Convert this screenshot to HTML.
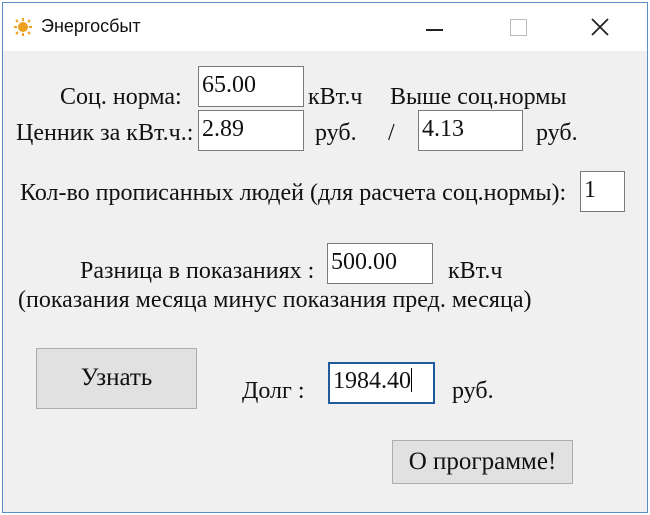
<!DOCTYPE html>
<html><head><meta charset="utf-8"><style>
body{margin:0;width:650px;height:515px;background:#fff;overflow:hidden;font-family:"Liberation Serif",serif;color:#111}
.win{position:absolute;left:2px;top:2px;width:644px;height:509px;border:1px solid #5a8ec4;background:#f0f0f0}
.tb{position:absolute;left:0;top:0;width:644px;height:48px;background:#fff;font-family:"Liberation Sans",sans-serif;font-size:18px}
.t{position:absolute;white-space:nowrap;font-size:24px;line-height:26px}
.in{position:absolute;background:#fff;border:1px solid #7a7a7a;box-sizing:border-box;font-size:24px;padding:5px 0 0 3px;line-height:26px;white-space:nowrap}
.btn{position:absolute;background:#e1e1e1;border:1px solid #adadad;box-sizing:border-box;text-align:center;font-size:25px}
</style></head><body>
<div class="win">
<div class="tb">
<svg style="position:absolute;left:10px;top:14px" width="20" height="20" viewBox="0 0 20 20"><circle cx="10" cy="10" r="5" fill="#f0a020"/><g stroke="#f0a020" stroke-width="2"><line x1="10" y1="1" x2="10" y2="4"/><line x1="10" y1="16" x2="10" y2="19"/><line x1="1" y1="10" x2="4" y2="10"/><line x1="16" y1="10" x2="19" y2="10"/><line x1="3" y1="3" x2="5" y2="5"/><line x1="15" y1="15" x2="17" y2="17"/><line x1="3" y1="17" x2="5" y2="15"/><line x1="15" y1="5" x2="17" y2="3"/></g></svg>
<div style="position:absolute;left:38px;top:13px">Энергосбыт</div>
<div style="position:absolute;left:423px;top:26px;width:17px;height:2px;background:#222"></div>
<div style="position:absolute;left:507px;top:16px;width:15px;height:15px;border:1px solid #bbb"></div>
<svg style="position:absolute;left:588px;top:15px" width="18" height="18"><path d="M1 1L17 17M17 1L1 17" stroke="#222" stroke-width="1.8"/></svg>
</div>
</div>
<div class="t" style="left:60px;top:84px">Соц. норма:</div>
<div class="in" style="left:198px;top:66px;width:106px;height:41px">65.00</div>
<div class="t" style="left:308px;top:84px">кВт.ч</div>
<div class="t" style="left:390px;top:84px">Выше соц.нормы</div>
<div class="t" style="left:16px;top:120px">Ценник за кВт.ч.:</div>
<div class="in" style="left:198px;top:110px;width:106px;height:41px">2.89</div>
<div class="t" style="left:315px;top:120px">руб.</div>
<div class="t" style="left:388px;top:120px">/</div>
<div class="in" style="left:418px;top:110px;width:105px;height:41px">4.13</div>
<div class="t" style="left:536px;top:120px">руб.</div>
<div class="t" style="left:20px;top:180px">Кол-во прописанных людей (для расчета соц.нормы):</div>
<div class="in" style="left:580px;top:171px;width:45px;height:41px">1</div>
<div class="t" style="left:80px;top:258px">Разница в показаниях :</div>
<div class="in" style="left:327px;top:243px;width:106px;height:41px">500.00</div>
<div class="t" style="left:448px;top:258px">кВт.ч</div>
<div class="t" style="left:18px;top:287px">(показания месяца минус показания пред. месяца)</div>
<div class="btn" style="left:36px;top:348px;width:161px;height:61px;line-height:58px">Узнать</div>
<div class="t" style="left:242px;top:378px">Долг :</div>
<div class="in" style="left:328px;top:362px;width:107px;height:42px;border:2px solid #1e5a9c;padding-top:4px">1984.40<span style="display:inline-block;width:1px;height:24px;background:#000;vertical-align:-4px"></span></div>
<div class="t" style="left:452px;top:378px">руб.</div>
<div class="btn" style="left:392px;top:440px;width:181px;height:44px;line-height:42px">О программе!</div>
</body></html>
